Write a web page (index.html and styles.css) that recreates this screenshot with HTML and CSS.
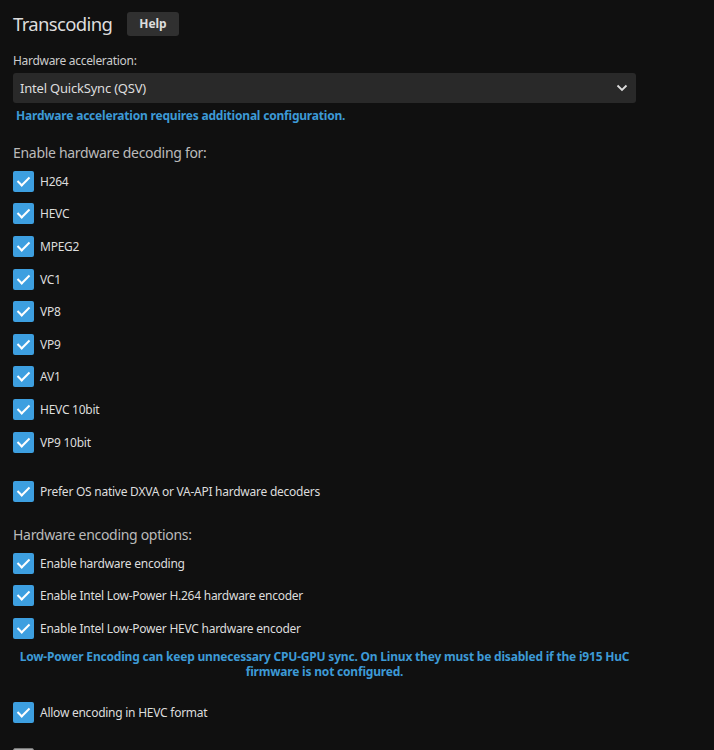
FILE: index.html
```html
<!DOCTYPE html>
<html>
<head>
    <meta charset="UTF-8">
    <title>Transcoding</title>
    <link rel="stylesheet" href="styles.css">
</head>
<body>
    <div class="content">
        <div class="section-header">
            <h2>Transcoding</h2>
            <button class="help-button">Help</button>
        </div>

        <div class="select-block">
            <label class="select-label">Hardware acceleration:</label>
            <div class="select">
                <span>Intel QuickSync (QSV)</span>
                <svg class="chevron" width="12" height="8" viewBox="0 0 12 8"><path d="M1.5 1.5 L6 6 L10.5 1.5" fill="none" stroke="#ddd" stroke-width="1.8"/></svg>
            </div>
            <div class="field-note">Hardware acceleration requires additional configuration.</div>
        </div>

        <h3 class="group-title">Enable hardware decoding for:</h3>
        <div class="checklist">
            <label class="check"><span class="box"></span>H264</label>
            <label class="check"><span class="box"></span>HEVC</label>
            <label class="check"><span class="box"></span>MPEG2</label>
            <label class="check"><span class="box"></span>VC1</label>
            <label class="check"><span class="box"></span>VP8</label>
            <label class="check"><span class="box"></span>VP9</label>
            <label class="check"><span class="box"></span>AV1</label>
            <label class="check"><span class="box"></span>HEVC 10bit</label>
            <label class="check"><span class="box"></span>VP9 10bit</label>
        </div>

        <div class="checklist spaced">
            <label class="check"><span class="box"></span>Prefer OS native DXVA or VA-API hardware decoders</label>
        </div>

        <h3 class="group-title">Hardware encoding options:</h3>
        <div class="checklist">
            <label class="check"><span class="box"></span>Enable hardware encoding</label>
            <label class="check"><span class="box"></span>Enable Intel Low-Power H.264 hardware encoder</label>
            <label class="check"><span class="box"></span>Enable Intel Low-Power HEVC hardware encoder</label>
        </div>
        <div class="field-note centered">Low-Power Encoding can keep unnecessary CPU-GPU sync. On Linux they must be disabled if the i915 HuC firmware is not configured.</div>

        <div class="checklist spaced">
            <label class="check"><span class="box"></span>Allow encoding in HEVC format</label>
        </div>
        <div class="checklist next">
            <label class="check"><span class="box off"></span>Allow encoding in AV1 format</label>
        </div>
    </div>
</body>
</html>
```

FILE: styles.css
```css
html,
body {
    margin: 0;
    background: #101010;
    color: #ddd;
    font-family: 'Noto Sans', sans-serif;
    overflow: hidden;
}

.content {
    width: 623px;
    padding: 11px 0 0 13px;
}

.section-header {
    display: flex;
    align-items: center;
    gap: 15px;
}

h2 {
    margin: 0;
    font-size: 18.5px;
    font-weight: 400;
    letter-spacing: -0.65px;
    color: #ddd;
}

.help-button {
    font-family: 'Noto Sans', sans-serif;
    font-size: 12px;
    font-weight: bold;
    color: #ddd;
    background: #303030;
    border: none;
    border-radius: 3px;
    height: 24px;
    padding: 0 12px;
}

.select-block {
    margin-top: 16px;
    padding-bottom: 2px;
}

.select-label {
    display: block;
    font-size: 12px;
    letter-spacing: -0.3px;
    color: #ccc;
    margin-bottom: 4px;
}

.select {
    display: flex;
    align-items: center;
    justify-content: space-between;
    height: 30px;
    padding: 0 8px 0 7px;
    background: #292929;
    border-radius: 3px;
    font-size: 13px;
    letter-spacing: -0.2px;
    color: #ddd;
}

.field-note {
    font-size: 12px;
    font-weight: bold;
    letter-spacing: -0.2px;
    color: #3d9ad6;
    margin: 4px 0 0 3px;
}

.field-note.centered {
    text-align: center;
    margin: 4px 0 0;
    line-height: 15px;
}

.group-title {
    margin: 17px 0 3px;
    font-size: 14px;
    font-weight: 400;
    letter-spacing: -0.3px;
    color: #bbb;
}

.checklist {
    display: flex;
    flex-direction: column;
}

.checklist.spaced {
    margin-top: 17px;
}

.checklist.next {
    margin-top: 14px;
}

.check {
    display: flex;
    align-items: center;
    gap: 6px;
    height: 32.6px;
    font-size: 12px;
    letter-spacing: -0.25px;
    color: #ddd;
}

.box {
    width: 21px;
    height: 21px;
    border-radius: 2px;
    background: #3d9fe0;
    position: relative;
}

.box::after {
    content: '';
    position: absolute;
    left: 7px;
    top: 3px;
    width: 5px;
    height: 10px;
    border: solid #fff;
    border-width: 0 2px 2px 0;
    transform: rotate(45deg);
}

.box.off {
    box-sizing: border-box;
    background: #aaa;
    border: 1px solid #777;
}

.box.off::after {
    display: none;
}
```
